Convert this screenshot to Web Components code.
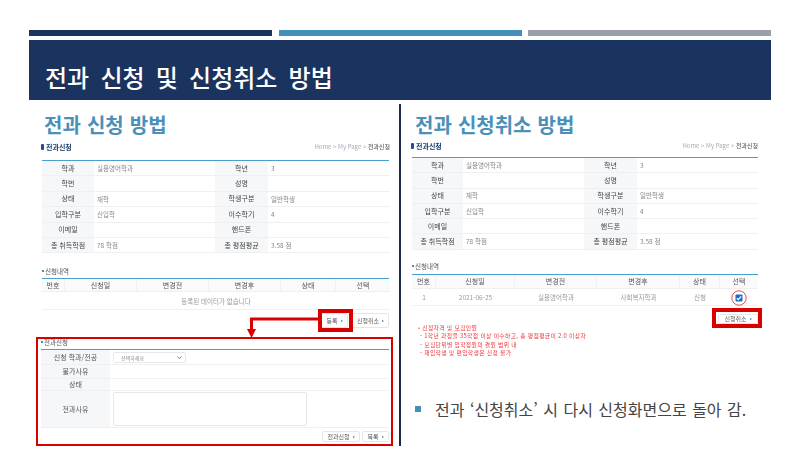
<!DOCTYPE html>
<html lang="ko">
<head>
<meta charset="UTF-8">
<title>전과 신청 및 신청취소 방법</title>
<style>
  html, body { margin: 0; background: #fff; }
  body { font-family: "Noto Sans CJK KR", "Noto Sans", sans-serif; }
</style>
</head>
<body>
<slide-deck heading="전과 신청 및 신청취소 방법">
  <slide-column slot="left" heading="전과 신청 방법">
    <portal-header></portal-header>
    <info-table style="margin-top:7px" cols="52px 121px 53px 122px" row="15.4"></info-table>
    <history-table style="margin-top:13px" cols="23px 72px 72px 72px 55px 54px" head="13" body="18" empty="등록된 데이터가 없습니다"></history-table>
    <button-row style="margin-top:1px;height:19px;align-items:center;gap:4px">
      <portal-button style="width:27px">등록</portal-button>
      <portal-button style="width:37px">신청취소</portal-button>
    </button-row>
    <transfer-form></transfer-form>
    <mark-box x="289" y="205" w="35" h="23" size="4"></mark-box>
    <mark-box x="7" y="233" w="357" h="109" size="2"></mark-box>
    <callout-arrow></callout-arrow>
  </slide-column>

  <slide-column slot="right" heading="전과 신청취소 방법">
    <portal-header style="margin:6px 13px 0 10px"></portal-header>
    <info-table style="margin:5px 13px 0 11px" cols="51px 121px 53px 121px" row="15.3"></info-table>
    <history-table style="margin:12px 13px 0 11px" cols="24px 79px 82px 83px 40px 38px" head="14" body="17" rows='[["1","2021-06-25","실용영어학과","사회복지학과","신청",""]]'></history-table>
    <button-row style="margin:8px 13px 0 11px;height:10px;align-items:center">
      <portal-button style="width:40px;height:10px">신청취소</portal-button>
    </button-row>
    <notice-list></notice-list>
    <bullet-note>전과 ‘신청취소’ 시 다시 신청화면으로 돌아 감.</bullet-note>
    <mark-box x="311" y="204" w="50" h="20" size="4"></mark-box>
    <check-mark></check-mark>
  </slide-column>
</slide-deck>

<script>
const KR = '"Noto Sans CJK KR", "Noto Sans", sans-serif';

class Base extends HTMLElement {
  constructor() {
    super();
    this.attachShadow({ mode: 'open' });
  }
  attr(name, fallback) {
    return this.hasAttribute(name) ? this.getAttribute(name) : fallback;
  }
}

class SlideDeck extends Base {
  connectedCallback() {
    this.shadowRoot.innerHTML = `
      <style>
        :host { display: block; width: 800px; height: 450px; overflow: hidden; box-sizing: border-box; padding: 30px 29px 0; }
        .bars { display: grid; grid-template-columns: 243px 243px 243px; column-gap: 6.5px; }
        .bars i { display: block; height: 6px; }
        .band { height: 60px; margin-top: 4px; background: #1b335f; color: #fff; display: flex; align-items: flex-end; padding: 0 0 5px 16px; box-sizing: border-box; }
        h1 { margin: 0; font: 500 24px/36px ${KR}; word-spacing: 4.5px; }
        .cols { display: grid; grid-template-columns: 370px 2px 370px; margin-top: 4px; }
        .rule { background: #1b2a4a; height: 342px; }
      </style>
      <div class="bars">
        <i style="background:#1b335f"></i><i style="background:#448fb8"></i><i style="background:#9aa0aa"></i>
      </div>
      <div class="band"><h1>${this.attr('heading', '')}</h1></div>
      <div class="cols">
        <slot name="left"></slot>
        <div class="rule"></div>
        <slot name="right"></slot>
      </div>`;
  }
}

class SlideColumn extends Base {
  connectedCallback() {
    this.shadowRoot.innerHTML = `
      <style>
        :host { display: block; position: relative; height: 342px; }
        h2 { margin: 0; padding: 7px 0 0 15px; height: 30px; box-sizing: border-box; font: 700 20px/27px ${KR}; color: #4a90b8; word-spacing: .5px; white-space: nowrap; }
        :host([slot="right"]) h2 { padding-left: 14px; }
      </style>
      <h2>${this.attr('heading', '')}</h2>
      <slot></slot>`;
  }
}

class PortalHeader extends Base {
  connectedCallback() {
    this.shadowRoot.innerHTML = `
      <style>
        :host { display: flex; justify-content: space-between; align-items: center; height: 12px; margin: 7px 9px 0 12px; font: 6px/12px ${KR}; filter: blur(.3px); }
        .t { color: #1d3f6e; font-size: 7px; font-weight: 700; display: flex; align-items: center; gap: 2px; }
        .t i { display: block; width: 3px; height: 6px; border-radius: 1px; background: #1b4f9c; }
        .c { color: #a5adb8; }
        .c b { color: #666; font-weight: 500; }
      </style>
      <span class="t"><i></i>전과신청</span>
      <span class="c">Home &gt; My Page &gt; <b>전과신청</b></span>`;
  }
}

const INFO_ROWS = [
  ['학과', '실용영어학과', '학년', '3'],
  ['학번', '', '성명', ''],
  ['상태', '재학', '학생구분', '일반학생'],
  ['입학구분', '신입학', '이수학기', '4'],
  ['이메일', '', '핸드폰', ''],
  ['총 취득학점', '78 학점', '총 평점평균', '3.58 점']
];

class InfoTable extends Base {
  connectedCallback() {
    const h = this.attr('row', '15.5');
    const cells = INFO_ROWS.map(r => r.map((txt, i) =>
      `<div class="${i % 2 ? 'v' : 'k'}">${txt}</div>`).join('')).join('');
    this.shadowRoot.innerHTML = `
      <style>
        :host { display: block; margin: 4px 10px 0 13px; border-top: 1px solid #4a9fd0; filter: blur(.3px); }
        .g { display: grid; grid-template-columns: ${this.attr('cols')}; grid-auto-rows: ${h}px; font: 7px/1 ${KR}; }
        .g div { display: flex; align-items: center; border-bottom: 1px solid #eef0f2; box-sizing: border-box; }
        .k { justify-content: center; background: #f6f7f9; color: #444; }
        .v { padding-left: 3px; color: #888; font-size: 6.5px; }
      </style>
      <div class="g">${cells}</div>`;
  }
}

class HistoryTable extends Base {
  connectedCallback() {
    const rows = JSON.parse(this.attr('rows', '[]'));
    const head = ['번호', '신청일', '변경전', '변경후', '상태', '선택'];
    const headCells = head.map(t => `<div class="h" style="height:${this.attr('head')}px">${t}</div>`).join('');
    let bodyCells = rows.map(r => r.map(t => `<div class="d" style="height:${this.attr('body')}px">${t}</div>`).join('')).join('');
    if (!rows.length) {
      bodyCells = `<div class="d e" style="height:${this.attr('body')}px">${this.attr('empty', '')}</div>`;
    }
    this.shadowRoot.innerHTML = `
      <style>
        :host { display: block; margin: 0 10px 0 13px; font: 7px/1 ${KR}; filter: blur(.3px); }
        .cap { display: flex; align-items: center; gap: 1px; height: 9px; color: #555; margin-bottom: 3px; font-size: 6.500px; }
        .cap i { display: block; width: 2px; height: 2px; background: #448fb8; }
        .g { display: grid; grid-template-columns: ${this.attr('cols')}; border-top: 1px solid #4a9fd0; }
        .g div { display: flex; align-items: center; justify-content: center; box-sizing: border-box; border-bottom: 1px solid #eef0f2; }
        .h { color: #555; background: #fafafb; border-right: 1px solid #eef0f2; }
        .h:nth-child(6) { border-right: 0; }
        .d { color: #999; font-size: 6.5px; }
        .e { grid-column: 1 / -1; }
      </style>
      <div class="cap"><i></i>신청내역</div>
      <div class="g">${headCells}${bodyCells}</div>`;
  }
}

class ButtonRow extends Base {
  connectedCallback() {
    this.shadowRoot.innerHTML = `
      <style>
        :host { display: flex; justify-content: flex-end; gap: 0; margin: 0 10px 0 13px; filter: blur(.3px); }
      </style>
      <slot></slot>`;
  }
}

class PortalButton extends Base {
  connectedCallback() {
    this.shadowRoot.innerHTML = `
      <style>
        :host { display: inline-flex; align-items: center; justify-content: center; gap: 3px; height: 15px; box-sizing: border-box; border: 1px solid #e4e6e9; border-radius: 2px; background: #fff; font: 6px/1 ${KR}; color: #555; }
        i { display: block; border-left: 2px solid #2f7fb5; border-top: 1.5px solid transparent; border-bottom: 1.5px solid transparent; }
      </style>
      <slot></slot><i></i>`;
  }
}

class TransferForm extends Base {
  connectedCallback() {
    this.shadowRoot.innerHTML = `
      <style>
        :host { display: block; margin: 7px 10px 0 12px; font: 7px/1 ${KR}; color: #555; filter: blur(.3px); }
        .cap { display: flex; align-items: center; gap: 1px; height: 9px; margin-bottom: 3px; font-size: 6.5px; }
        .cap i { display: block; width: 2px; height: 2px; background: #448fb8; }
        .g { display: grid; grid-template-columns: 69px 279px; grid-template-rows: 15px 14px 12px 37px; border-top: 1px solid #4a9fd0; }
        .g > div { display: flex; align-items: center; box-sizing: border-box; border-bottom: 1px solid #eef0f2; }
        .k { justify-content: center; background: #f6f7f9; }
        .v { padding-left: 3px; }
        .sel { width: 73px; height: 11px; border: 1px solid #e6e8ea; border-radius: 2px; box-sizing: border-box; display: flex; align-items: center; justify-content: space-between; padding: 0 3px 0 7px; font-size: 5px; color: #888; }
        .sel svg { display: block; }
        .ta { width: 194px; height: 34px; border: 1px solid #e6e8ea; border-radius: 2px; box-sizing: border-box; }
        .btns { display: flex; justify-content: flex-end; gap: 2px; margin-top: 3px; }
      </style>
      <div class="cap"><i></i>전과신청</div>
      <div class="g">
        <div class="k">신청 학과/전공</div>
        <div class="v"><div class="sel">선택하세요<svg width="5" height="3" viewBox="0 0 5 3"><path d="M.5.5 2.5 2.5 4.5.5" fill="none" stroke="#555" stroke-width=".8"/></svg></div></div>
        <div class="k">불가사유</div><div class="v"></div>
        <div class="k">상태</div><div class="v"></div>
        <div class="k">전과사유</div>
        <div class="v"><div class="ta"></div></div>
      </div>
      <div class="btns">
        <portal-button style="width:38px;height:11px">전과신청</portal-button>
        <portal-button style="width:27px;height:11px">목록</portal-button>
      </div>`;
  }
}

class NoticeList extends Base {
  connectedCallback() {
    const lines = [
      '• 신청자격 및 모집인원',
      ' - 1학년 과정을 35학점 이상 이수하고, 총 평점평균이 2.0 이상자',
      ' - 모집단위별 입학정원의 결원 범위 내',
      ' - 재입학생 및 편입학생은 신청 불가'
    ];
    this.shadowRoot.innerHTML = `
      <style>
        :host { display: block; margin: 0 0 0 17px; font: 5.8px/8.4px ${KR}; letter-spacing: .33px; color: #f0343a; filter: blur(.2px); }
        div { white-space: pre; }
      </style>
      ${lines.map(l => `<div>${l}</div>`).join('')}`;
  }
}

class BulletNote extends Base {
  connectedCallback() {
    this.shadowRoot.innerHTML = `
      <style>
        :host { display: flex; align-items: center; margin: 41px 0 0 14px; font: 400 16px/22px ${KR}; color: #444; word-spacing: 1px; }
        i { display: block; width: 6px; height: 6px; background: #448fb8; margin-right: 14px; flex: none; }
      </style>
      <i></i><slot></slot>`;
  }
}

// red callouts drawn over the captured screens
class MarkBox extends Base {
  connectedCallback() {
    this.shadowRoot.innerHTML = `
      <style>
        :host { display: block; position: absolute; box-sizing: border-box; left: ${this.attr('x')}px; top: ${this.attr('y')}px; width: ${this.attr('w')}px; height: ${this.attr('h')}px; border: ${this.attr('size')}px solid #d90000; pointer-events: none; }
      </style>`;
  }
}

class CalloutArrow extends Base {
  connectedCallback() {
    this.shadowRoot.innerHTML = `
      <style>
        :host { display: block; position: absolute; left: 215px; top: 212px; width: 76px; height: 24px; }
        svg { display: block; }
      </style>
      <svg width="76" height="24" viewBox="0 0 76 24">
        <path d="M75 3H7.500V14" fill="none" stroke="#d90000" stroke-width="3"/>
        <path d="M3 13H12L7.500 22Z" fill="#d90000"/>
      </svg>`;
  }
}

class CheckMark extends Base {
  connectedCallback() {
    this.shadowRoot.innerHTML = `
      <style>
        :host { display: block; position: absolute; left: 330px; top: 186px; width: 16px; height: 16px; }
        svg { display: block; }
      </style>
      <svg width="16" height="16" viewBox="0 0 16 16">
        <circle cx="8" cy="8" r="7.200" fill="none" stroke="#d22" stroke-width=".8"/>
        <rect x="4.500" y="4.500" width="7" height="7" rx="1" fill="#1c6fc9"/>
        <path d="M5.800 8.200 7.300 9.600 10.200 6.300" fill="none" stroke="#fff" stroke-width="1.200"/>
      </svg>`;
  }
}

customElements.define('portal-button', PortalButton);
customElements.define('portal-header', PortalHeader);
customElements.define('info-table', InfoTable);
customElements.define('history-table', HistoryTable);
customElements.define('button-row', ButtonRow);
customElements.define('transfer-form', TransferForm);
customElements.define('notice-list', NoticeList);
customElements.define('bullet-note', BulletNote);
customElements.define('mark-box', MarkBox);
customElements.define('callout-arrow', CalloutArrow);
customElements.define('check-mark', CheckMark);
customElements.define('slide-column', SlideColumn);
customElements.define('slide-deck', SlideDeck);
</script>
</body>
</html>
